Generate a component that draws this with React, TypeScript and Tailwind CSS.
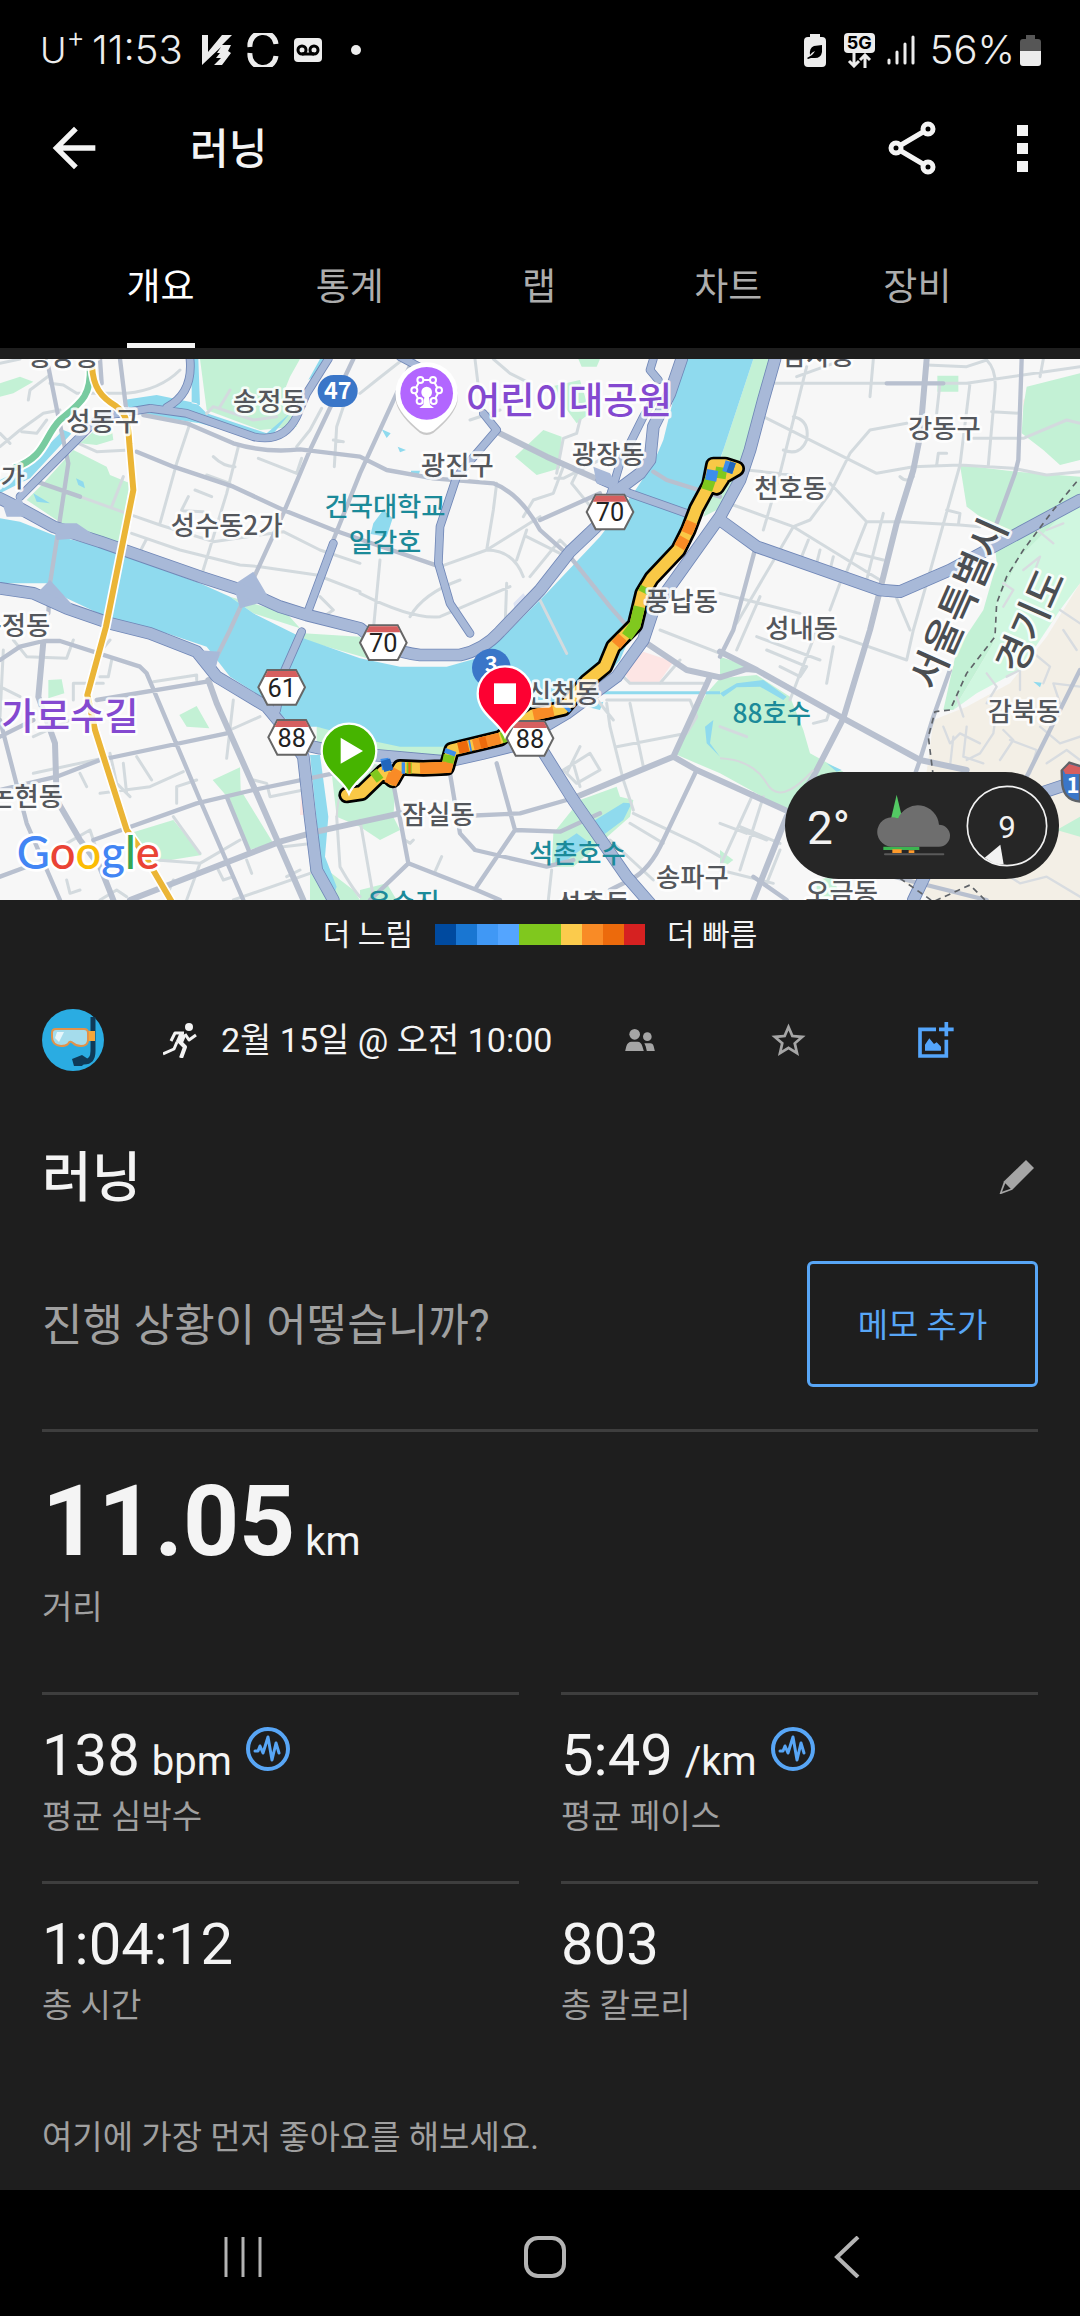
import React, { useState } from "react";
import { MdArrowBack, MdStarBorder } from "react-icons/md";

const tabs = ["개요", "통계", "랩", "차트", "장비"];

const paceColors = [
  "#004a9f", "#1976d2", "#4098f5", "#54a5ff", "#80c81e",
  "#80c81e", "#fbcb4c", "#f98b26", "#ec6a0c", "#d62121",
];

const stats = [
  { value: "138", unit: "bpm", label: "평균 심박수", chart: true },
  { value: "5:49", unit: "/km", label: "평균 페이스", chart: true },
  { value: "1:04:12", label: "총 시간" },
  { value: "803", label: "총 칼로리" },
];

// Map geometry, in the units of the map's viewBox
const minorRoads = [
  "M85 150 L90 120 L150 75 M150 100 L190 105 L230 130 L380 130 Q480 120 540 60",
  "M0 40 L60 27 M0 290 L60 240 L130 190 L180 180 M0 250 L30 280 M65 245 L110 250 L140 210",
  "M235 280 L290 305 L390 300 M570 220 L530 340 L480 520 M715 290 L680 430 L605 675",
  "M370 380 L335 470 M240 440 L380 490 L480 525 L640 575 L850 545 L960 600 L1080 640",
  "M395 550 L540 600 L720 645 L780 650 M780 650 L950 675 L1080 725 M438 570 L420 605",
  "M640 320 Q670 350 705 350 M775 325 L890 370 L905 325 M620 375 L690 400 M585 420 L635 440",
  "M545 480 L565 440 M545 482 L610 485 M965 175 L930 240 L890 290 M1030 170 L1010 230 L1003 350",
  "M1000 270 L1030 275 M960 740 L1000 780 L970 800 M620 190 L640 170 L760 210 L830 200 M660 170 L690 120",
  "M1210 27 L1130 90 L1080 130 M1425 27 L1435 110 M1480 27 L1530 70 L1590 100 M1410 210 L1500 180",
  "M1690 350 L1660 430 L1600 450 L1570 500 M1740 350 L1715 400 L1780 480 M1665 385 L1690 385 L1800 330",
  "M1740 210 L1730 250 L1690 265 L1670 370 M1490 400 L1480 480 L1460 600 M1320 650 L1460 600 Q1540 600 1570 680",
  "M1580 540 L1550 630 M1460 600 L1620 500 M1590 680 L1680 570 L1720 610 M1080 730 Q1240 810 1320 800 L1530 710",
  "M1230 800 Q1270 730 1380 690 M1520 700 L1515 840 M1140 630 L1120 840 M1580 560 L1680 610 M1610 730 L1700 910",
  "M2310 100 L2900 100 L3240 50 M2290 200 L2630 370 L2740 350 L2880 345 L3040 355 L3140 375 L3240 365",
  "M2420 50 L2340 370 L2290 540 M2910 100 L2880 345 L2780 700 L2740 840 M2960 30 Q2990 60 2985 120 L2965 345",
  "M2600 515 L2700 515 L2880 525 L2940 530 M2720 220 L2610 240 L2550 310 L2490 430 L2430 510 L2380 530 L2200 465",
  "M2490 400 L2600 515 L2530 690 M2380 530 L2640 690 M2380 530 L2210 820 M2975 185 L3060 190",
  "M2920 265 L3070 265 L3200 210 L3240 220 M2820 100 L2810 190 M2620 27 L2610 140 M2650 490 L2600 690",
  "M2570 610 L2650 630 M2160 730 L2400 790 M2280 740 L2210 900 M2520 700 L2490 780 M2690 745 L2730 840",
  "M2380 200 Q2430 210 2420 270 Q2400 320 2350 300 M2425 570 L2405 620 M2460 600 L2450 640 M2500 620 L2490 660",
  "M2840 480 L2880 490 L2875 525 M2810 345 L2815 310 L2840 310 M2780 45 L2900 50 L2960 30 M3120 80 L3130 27",
  "M2240 360 L2380 375 M2390 80 L2500 40 M2700 380 Q2720 400 2740 380",
  "M40 870 L80 920 L200 925 L220 870 M280 930 L330 870 M220 1050 L220 1000 L310 1000 M300 980 L325 980 L335 930",
  "M460 995 L590 975 L590 990 M0 1010 L60 1040 M0 1100 L10 900 M100 1160 L210 1110 M330 1210 L350 1300 L390 1340",
  "M370 1240 L380 1330 M410 1220 L455 1290 M300 1330 L450 1310 L550 1265 M100 1270 L330 1220 M240 1270 L260 1310",
  "M530 1360 L530 1310 L590 1290 M680 1225 L700 1050 M690 1140 L780 1100 M760 1290 L800 1300 L810 1340 L910 1320",
  "M200 1480 L270 1440 L290 1500 M300 1650 L350 1620 L380 1640 M650 1550 L670 1590 L700 1580 M700 1650 L930 1570",
  "M470 1530 L600 1540 L720 1470 M520 1400 Q570 1470 600 1510 M200 1590 L210 1630 L240 1620 M850 1490 L940 1480",
  "M740 1530 L755 1570 M860 1580 L900 1560 M500 1640 L520 1590 M600 1540 L560 1650",
  "M1010 1400 L1020 1550 Q1060 1620 1080 1640 M1080 1410 L1120 1640 M1240 1470 L1230 1480 L1215 1470 M1325 1520 L1305 1565",
  "M1820 1050 L2070 1050 L2090 1100 L2060 1150 L1850 1190 M1820 1060 L1830 1130 L1870 1290 L1900 1380",
  "M1890 1060 L1930 1250 M1690 1260 L1770 1210 L1800 1260 L1730 1300 Z M1740 1190 L1700 1270 M1720 1240 L1740 1310",
  "M1900 1390 L2090 1480 L2160 1520 M1890 1420 L1990 1480 M1830 1470 L1960 1590 M1655 1560 L1645 1650",
  "M1860 970 L1890 1000 L2110 1000 M1980 1000 L2040 930 M1980 840 L2160 910 M1760 1010 L1840 1110",
  "M2160 1130 L2240 1160 M2160 1550 L2260 1330 M2220 1440 L2300 1470 M2160 1420 L2240 1450 M2290 1340 L2220 1560",
  "M2220 1430 L2340 1480 M2160 1560 L2320 1600 M2300 1600 L2340 1500 M2480 1000 L2500 890 M2300 900 L2420 950 L2400 980 L2340 950 M2270 860 L2460 930",
  "M2520 860 L2720 930 M2740 840 L2720 930 M2450 840 L2370 1050 M2440 1120 L2480 1110 L2490 1080",
];

const beigeLanes = [
  "M2830 1130 L2850 1180 L2880 1150 L2940 1180 M2860 1160 L2850 1250 M2900 1130 L2890 1220 L2950 1240",
  "M2960 970 L2990 1010 L2960 1060 M3020 980 L3060 960 L3060 1020 M2990 1080 L2980 1150 L2940 1210 L2900 1230",
  "M3010 1140 L3040 1170 L3000 1230 M3030 1170 L3110 1200 L3090 1270 M3120 1130 L3180 1180 L3240 1160",
  "M3140 1240 L3200 1200 L3240 1230 M3180 1060 L3160 1000 L3240 1010 M3090 900 L3150 950 L3130 1000",
  "M3000 1560 L3060 1600 L3140 1580 L3240 1640 M3090 700 L3120 620 L3070 660 M3010 770 L3040 720 L3010 700 M3100 530 L3160 580 M3140 540 L3190 520",
  "M3180 780 L3240 820 M3190 840 L3230 900 M2870 1040 L2890 1100",
];

const arterials = [
  "M145 50 L175 200 L205 340 L175 540 L150 700 L145 790",
  "M360 27 L380 190 M410 305 L520 350 L700 410 L850 480 L1000 540 L1130 585 L1320 650",
  "M430 195 L560 220 L700 280 Q800 310 900 298 L1080 320 L1160 360 L1300 385 L1480 400 Q1560 430 1620 540 L1710 620 L1830 770 L1900 850",
  "M1060 27 L930 300 L850 490 L740 730 L690 840 L650 920 M1240 27 L1190 130 L1080 370 L1000 570",
  "M1620 510 L1800 430 M1960 365 L2000 390 L2160 440 M110 395 L240 440 M300 27 L305 100",
  "M0 930 L60 890 L130 873 L180 873 L420 950 L440 970 L600 1350 L730 1650",
  "M0 1110 L80 1420 L180 1650 M0 1160 L100 1110 M290 1050 L620 995 M0 1320 L170 1280 L300 1230 L680 1150",
  "M280 1470 L590 1360 L760 1320 L1000 1270 M680 1340 L750 1510 M0 1580 L80 1550",
  "M1180 1300 L1225 1540 L1430 1620 L1500 1650 M1225 1540 L1110 1650 M1350 1270 L1380 1450 L1425 1500 L1640 1550 L1720 1530",
  "M1490 1240 L1545 1440 L1430 1610 M1390 1398 L1560 1390 L1700 1350 M1545 1440 L1680 1445 L1800 1390",
  "M2090 1260 L1990 1470 Q1950 1560 1890 1590 L1830 1620",
  "M2270 580 L2200 840 L2160 920 M3240 960 L3080 1280 M2850 960 L2800 1100 L2760 1230 L2700 1400 M2600 1560 L2960 1650",
  "M3065 27 L3055 330 L3045 370 L2990 520 M2660 100 L2830 100 M2260 1580 L2360 1650",
];

const wideArterials = [
  "M130 875 L115 1040 L165 1180 L170 1350 L240 1470 L300 1550 L340 1650",
  "M625 990 L650 1060 L770 1330 L910 1650",
  "M390 1650 L840 1475 L950 1445 L1200 1390",
  "M1500 250 L1640 320 L1820 400",
  "M1730 1340 L2020 1220 L2130 980 M2020 1220 L2090 1260 L2400 1400",
  "M1940 880 L2060 960 L2160 982 L2240 957 L2270 960 L2530 1105 L2760 1230 L2900 1260 M2160 905 L2270 960",
  "M2780 27 L2760 260 L2740 360 L2690 520 L2640 720 L2610 840 L2530 1105 L2440 1280 L2360 1400 L2260 1650",
];

const highways = [
  "M60 440 L220 280 L300 200 L450 175 L560 190 L760 260 Q850 280 890 200 L920 130 L985 27",
  "M570 27 Q580 130 500 172",
  "M1200 20 L1340 95 M1450 190 L1490 240 L1370 380 L1320 530 L1315 640 L1350 760 L1410 850",
  "M1000 580 L920 795 M905 845 L850 970 L830 1080",
  "M1960 27 L1950 60 L1975 90 M1830 440 L1860 340 L1930 200 L1960 150",
  "M2060 490 L1890 430 L1800 390",
];

const wideHighways = [
  "M0 445 L60 475 L160 530 L300 575 L600 680 L740 725 L840 770 L920 795 L1080 835 Q1160 905 1260 915 L1380 915 Q1450 900 1500 845 L1620 720 L1710 605 L1810 510 L1840 430 L1920 370 L1950 330 L1960 230 L2010 130 L2045 27",
  "M0 715 L100 730 L200 775 L330 820 L450 850 L590 905 L650 980 L800 1070 L850 1130 L910 1220 L930 1400 L950 1560 L1000 1650",
  "M850 1170 L960 1195 L1120 1215 L1340 1235 L1450 1210 L1530 1190 L1700 1090 L1850 980 L1930 870 L1960 780 L2060 640 L2160 500 L2220 390 L2250 300 L2290 150 L2325 27",
  "M2160 510 L2270 590 L2640 720 L2700 725 L2850 660 L3240 450",
  "M1620 1190 L1720 1350 L1880 1580 L1950 1660",
  "M2740 1650 L2850 1420 L3240 1290",
];

const river =
  "M0 505 L60 515 L160 555 L300 590 L600 700 L690 740 L760 790 L910 865 L1080 925 L1200 950 L1340 950 L1430 925 L1500 870 L1640 730 L1800 560 L1900 430 L1960 340 L1990 270 L2050 27 L2260 27 L2170 300 L2110 460 L2000 640 L1920 790 L1860 930 L1760 1050 L1640 1110 L1500 1150 L1340 1190 L1200 1190 L1080 1165 L950 1130 L880 1130 L800 1050 L690 980 L620 890 L500 850 L370 825 L200 745 L140 700 L0 700 Z";

const parks = [
  "M600 27 L900 27 L870 80 L850 130 L890 230 L780 240 L620 180 Z",
  "M130 400 L220 300 L240 310 L320 350 L330 375 L390 400 L355 590 L200 530 L80 450 Z",
  "M240 280 L330 200 L340 270 L290 285 Z M0 100 L60 80 L100 95 L40 130 L0 140 Z",
  "M1545 320 L1630 240 L1685 260 L1680 355 L1610 375 Z M1735 27 L1800 27 L1790 50 L1745 50 Z",
  "M1650 110 L1740 90 L1770 190 L1730 220 Z M690 740 L860 790 L900 835 L760 790 Z",
  "M145 990 L185 988 L193 1030 L145 1045 Z M538 1095 L590 1068 L628 1135 L560 1130 Z",
  "M638 1290 L720 1252 L722 1320 L820 1480 L745 1500 L690 1350 Z M390 1450 L520 1410 L605 1515 L480 1535 Z",
  "M910 850 L1080 860 L1120 930 L910 870 Z M950 1130 L1340 1190 L1330 1225 L1080 1210 L950 1190 Z",
  "M985 1180 L1190 1270 L1180 1400 L1200 1440 L1140 1470 L1080 1430 L1010 1400 Z M930 1520 L1060 1620 L1080 1650 L930 1650 Z",
  "M1740 1350 L1850 1310 L1860 1340 L1900 1350 L1890 1400 L1720 1550 L1655 1550 L1660 1450 Z M1080 1620 L1160 1600 L1190 1650 L1080 1650 Z",
  "M2120 1030 L2160 985 L2270 975 L2370 1040 L2410 1140 L2430 1210 L2530 1265 L2430 1300 L2360 1380 L2160 1270 L2020 1210 Z",
  "M2160 920 L2250 950 L2160 975 Z M2260 27 L2310 27 L2210 390 L2150 480 L2110 500 L2170 300 Z",
  "M2812 77 L2875 77 L2875 125 L2812 125 Z M3080 110 L3240 70 L3240 330 L3180 345 L3130 300 L3065 250 L3070 170 Z",
  "M2880 345 L3050 365 L3240 380 L3240 440 L3060 620 L2990 760 L2980 880 L2860 1080 L2830 1080 L2870 900 L2950 780 L2990 640 L2980 530 L2900 470 Z",
  "M2160 1500 L2200 1530 L2160 1560 Z M2450 1590 L2500 1580 L2520 1640 L2450 1640 Z M3170 1440 L3240 1400 L3240 1460 Z",
];

const waters = [
  "M80 350 L190 240 L215 250 L90 385 L0 430 L0 390 Z",
  "M370 150 L470 135 L590 160 L620 190 L800 250 L870 190 L800 275 L600 220 L400 190 Z",
  "M595 27 L575 27 L575 160 L600 165 Z M940 80 L990 27 L960 27 L925 90 Z",
  "M228 385 L250 395 L255 415 L235 405 Z M100 430 L150 460 L110 455 Z M1145 238 L1172 250 L1160 264 Z M1193 290 L1218 300 L1200 307 Z M1233 362 L1260 362 L1256 375 L1233 375 Z",
  "M1120 520 L1150 480 L1178 505 L1160 560 L1112 552 Z",
  "M930 1215 L960 1215 L985 1400 L975 1520 L1010 1610 L1000 1640 L965 1560 Z",
  "M1770 1420 L1870 1358 L1895 1360 L1870 1410 L1790 1470 Z M1670 1490 L1730 1450 L1770 1480 L1700 1530 L1665 1540 Z",
  "M2160 1030 L2210 1000 L2290 990 L2360 1040 L2350 1050 L2280 1010 L2210 1012 L2170 1040 Z M2115 1130 L2140 1110 L2130 1180 L2160 1220 L2120 1180 Z",
  "M2480 1240 L2525 1260 L2510 1265 Z M3100 995 L3125 998 L3120 1012 Z M1760 1070 L1810 1055 L1800 1080 Z",
];

const track =
  "M1040 1335 L1085 1328 L1150 1265 L1178 1290 L1200 1252 L1270 1255 L1340 1252 L1355 1200 L1500 1165 L1600 1095 L1690 1075 L1760 995 L1815 950 L1840 890 L1905 825 L1928 730 L1955 685 L2035 600 L2065 540 L2090 475 L2128 405 L2140 345 L2175 345 L2210 356 L2172 378 L2150 412";

const paceSegments = [
  { color: "#80c81e", d: "M1120 1285 L1140 1270 M1220 1254 L1235 1254 M1343 1240 L1348 1215 M1505 1164 L1520 1158 M1880 860 L1905 825 L1918 770 M1930 728 L1938 712 M2120 420 L2132 385 M2160 385 L2165 352" },
  { color: "#f98b26", d: "M1160 1280 L1180 1288 L1195 1260 M1260 1255 L1340 1252 L1343 1238 M1420 1185 L1500 1165 M1600 1095 L1660 1082 M2038 592 L2054 564 M2060 550 L2075 515 M1848 885 L1868 862" },
  { color: "#ec6a0c", d: "M1375 1195 L1405 1188 M1440 1180 L1460 1175 M1225 1254 L1232 1254" },
  { color: "#3c8eea", d: "M1144 1244 L1168 1240 M1205 1254 L1215 1254 M1348 1214 L1353 1200 M1408 1188 L1413 1187 M1695 1076 L1703 1068 M2132 392 L2138 360 M2172 347 L2202 356" },
  { color: "#2166bd", d: "M1148 1250 L1175 1242 M2185 350 L2202 356" },
];

const placeLabels = [
  { x: 188, y: 48, text: "행당동" },
  { x: 308, y: 244, text: "성동구" },
  { x: 808, y: 182, text: "송정동" },
  { x: 16, y: 410, text: "2가" },
  { x: 680, y: 555, text: "성수동2가" },
  { x: 5, y: 855, text: "압구정동" },
  { x: 1372, y: 375, text: "광진구" },
  { x: 1825, y: 341, text: "광장동" },
  { x: 2045, y: 782, text: "풍납동" },
  { x: 2455, y: 44, text: "암사동" },
  { x: 2833, y: 264, text: "강동구" },
  { x: 2372, y: 445, text: "천호동" },
  { x: 2405, y: 863, text: "성내동" },
  { x: 80, y: 1369, text: "논현동" },
  { x: 1315, y: 1422, text: "잠실동" },
  { x: 1690, y: 1060, text: "신천동" },
  { x: 2077, y: 1612, text: "송파구" },
  { x: 1780, y: 1690, text: "석촌동" },
  { x: 3072, y: 1114, text: "감북동" },
  { x: 2525, y: 1657, text: "오금동" },
];

const waterLabels = [
  { x: 1155, y: 497, text: "건국대학교" },
  { x: 1155, y: 607, text: "일감호" },
  { x: 1732, y: 1540, text: "석촌호수" },
  { x: 1210, y: 1686, text: "유수지" },
  { x: 2315, y: 1120, text: "88호수" },
];

const shields = [
  { x: 1830, y: 486, text: "70" },
  { x: 845, y: 1012, text: "61" },
  { x: 875, y: 1162, text: "88" },
  { x: 1150, y: 878, text: "70" },
  { x: 1590, y: 1165, text: "88" },
];

function Roads({ paths, width, color }: { paths: string[]; width: number; color: string }) {
  return <path d={paths.join(" ")} fill="none" stroke={color} strokeWidth={width} strokeLinejoin="round" strokeLinecap="round" />;
}

function Pin({ x, y, color, children }: { x: number; y: number; color: string; children: React.ReactNode }) {
  return (
    <g transform={`translate(${x} ${y})`}>
      <path d="M0 128 C-18 84 -82 60 -82 0 A82 82 0 0 1 82 0 C82 60 18 84 0 128 Z" fill={color} stroke="#fff" strokeWidth="7" />
      {children}
    </g>
  );
}

function RouteMap() {
  return (
    <svg viewBox="0 27 3240 1623" className="block h-auto w-full font-['Noto_Sans_CJK_KR',sans-serif]" role="img" aria-label="지도">
      <rect y="27" width="3240" height="1623" fill="#f7f7f7" />
      <path d="M3240 700 L3140 860 L3030 1000 L2900 1070 L2800 1110 L2785 1230 L2760 1400 L2700 1590 L2800 1650 L3240 1650 Z" fill="#f3efe6" />
      <path d="M3240 430 L3060 620 L2990 760 L2980 880 L2860 1080 L2930 1030 L3060 960 L3180 780 L3240 700 Z" fill="#d0f7e0" />
      <path d="M1870 960 L1930 905 L2020 935 L1975 1000 L1890 1000 Z M905 1290 L918 1395 L900 1395 Z M3070 150 L3100 120 L3100 160 L3070 230 Z" fill="#fde5e4" />
      <path d="M1540 760 L1570 730 L1600 770 L1550 800 Z M620 27 L650 80 L660 110 L625 120 Z" fill="#dde3f3" />
      <path d={parks.join(" ")} fill="#c3f1d5" />
      <path d={river} fill="#8fdaee" />
      <path d={waters.join(" ")} fill="#8fdaee" />
      <path d="M1790 1028 H2160" stroke="#8fdaee" strokeWidth="9" />

      <Roads paths={beigeLanes} width={7} color="#d8dce0" />
      <Roads paths={minorRoads} width={9} color="#d3dade" />
      <Roads paths={arterials} width={13} color="#b8c0cf" />
      <Roads paths={wideArterials} width={18} color="#b8c0cf" />
      <path d="M1080 1230 L1180 1270 Q1020 1210 1010 1400 M2160 1225 Q2260 1230 2300 1300 T2440 1260" fill="none" stroke="#d5d9dc" strokeWidth="6" />
      <Roads paths={highways} width={26} color="#7087b7" />
      <Roads paths={wideHighways} width={38} color="#7087b7" />
      <path d="M150 690 L240 790 L100 740 Z M700 705 L760 665 L810 750 L720 775 Z M160 520 L230 520 L290 560 L170 570 Z M10 470 L60 440 L90 500 L20 500 Z M1780 350 L1830 370 L1860 420 L1790 400 Z M590 900 L660 905 L640 980 Z" fill="#a8b9d8" />
      <Roads paths={highways} width={21} color="#a8b9d8" />
      <Roads paths={wideHighways} width={33} color="#a8b9d8" />

      <path
        d="M3230 395 L3160 480 L3070 600 L3020 680 L2990 760 L2985 860 L2900 970 L2850 1080 L2805 1085 L2785 1160 L2800 1280 M2700 1585 L2800 1655 L2910 1605 L2960 1655"
        fill="none" stroke="#5f6368" strokeWidth="5" strokeDasharray="18 14"
      />

      {/* Subway lines */}
      <path d="M270 50 C275 140 240 160 180 210 C130 260 140 320 40 355" fill="none" stroke="#fff" strokeWidth="32" />
      <path d="M270 50 C275 140 240 160 180 210 C130 260 140 320 40 355" fill="none" stroke="#78cba0" strokeWidth="20" />
      <path d="M276 50 C280 110 300 140 350 170 C382 192 385 230 388 280 L400 420 L318 830 L262 1035 L285 1140 L380 1440 L430 1510 L515 1655" fill="none" stroke="#fff" strokeWidth="28" />
      <path d="M276 50 C280 110 300 140 350 170 C382 192 385 230 388 280 L400 420 L318 830 L262 1035 L285 1140 L380 1440 L430 1510 L515 1655" fill="none" stroke="#ebb536" strokeWidth="18" />

      {/* Route, coloured by pace */}
      <path d={track} fill="none" stroke="#000" strokeWidth="50" strokeLinejoin="round" strokeLinecap="round" />
      <path d={track} fill="none" stroke="#f9c846" strokeWidth="34" strokeLinejoin="round" strokeLinecap="round" />
      {paceSegments.map((s) => (
        <path key={s.color} d={s.d} fill="none" stroke={s.color} strokeWidth="34" />
      ))}

      {/* Road numbers */}
      <rect x="953" y="75" width="120" height="96" rx="48" fill="#3a76c8" />
      <text x="1013" y="148" textAnchor="middle" fontSize="70" fontWeight="700" fill="#fff">47</text>
      <circle cx="1474" cy="954" r="58" fill="#3a76c8" />
      <text x="1474" y="966" textAnchor="middle" fontSize="66" fontWeight="700" fill="#fff">3</text>
      <path d="M3185 1262 L3208 1238 L3240 1248 V1355 Q3186 1350 3186 1290 Z" fill="#3a76c8" stroke="#5f6368" strokeWidth="7" />
      <path d="M3190 1260 L3208 1242 L3240 1252 V1272 H3196 Z" fill="#d65f5f" />
      <text x="3219" y="1328" textAnchor="middle" fontSize="66" fontWeight="700" fill="#fff">1</text>

      <g fontSize="79" fontWeight="500" fill="#54575c" stroke="#fff" strokeOpacity="0.85" strokeWidth="16" strokeLinejoin="round" paintOrder="stroke" textAnchor="middle">
        {placeLabels.map((l) => (
          <text key={l.text} x={l.x} y={l.y}>{l.text}</text>
        ))}
        <g fontSize="118" fill="#4b4e52">
          <text transform="translate(2915 778) rotate(-66)">서울특별시</text>
          <text transform="translate(3130 830) rotate(-66)">경기도</text>
        </g>
        <g fontSize="112" fontWeight="500" fill="#8449d0">
          <text x="1707" y="192">어린이대공원</text>
          <text x="210" y="1140">가로수길</text>
        </g>
      </g>
      <g fontSize="79" fontWeight="500" fill="#1b8a99" textAnchor="middle">
        {waterLabels.map((l) => (
          <text key={l.text} x={l.x} y={l.y}>{l.text}</text>
        ))}
      </g>

      {shields.map((s) => (
        <g key={`${s.x}-${s.text}`} transform={`translate(${s.x} ${s.y})`}>
          <path d="M-70 0 L-43 -52 H43 L70 0 L43 52 H-43 Z" fill="#fff" stroke="#666" strokeWidth="6" />
          <path d="M-42 -49 H42 L51 -31 H-51 Z" fill="#d65f5f" />
          <text y="28" textAnchor="middle" fontSize="76" fill="#222" className="font-['Roboto',sans-serif]">{s.text}</text>
        </g>
      ))}

      {/* Amusement park marker */}
      <g transform="translate(1280 130)">
        <path d="M-92 20 A94 94 0 1 1 92 20 Q82 62 20 112 Q0 124 -20 112 Q-82 62 -92 20 Z" fill="#00000030" transform="translate(0 7)" />
        <path d="M-92 20 A94 94 0 1 1 92 20 Q82 62 20 112 Q0 124 -20 112 Q-82 62 -92 20 Z" fill="#fff" />
        <circle r="79" fill="#b266ff" />
        <g stroke="#fff" strokeWidth="6" fill="none">
          <circle cx="-19" cy="-40" r="9" /><circle cx="19" cy="-40" r="9" />
          <circle cx="-37" cy="-9" r="9" /><circle cx="37" cy="-9" r="9" />
          <circle cx="-21" cy="23" r="9" /><circle cx="21" cy="23" r="9" />
          <path d="M-10 -40 H10 M-24 -32 L-32 -17 M24 -32 L32 -17 M-34 0 L-26 15 M34 0 L26 15" />
        </g>
        <path d="M-16 -4 A16 16 0 0 1 16 -4 Q16 8 7 12 L10 34 L22 44 H-22 L-10 34 L-7 12 Q-16 8 -16 -4 Z" fill="#fff" />
      </g>

      <Pin x={1047} y={1203} color="#46b400">
        <path d="M-25 -40 V38 L42 0 Z" fill="#fff" />
      </Pin>
      <Pin x={1515} y={1031} color="#fd0132">
        <rect x="-33" y="-31" width="66" height="62" fill="#fff" />
      </Pin>

      <text x="50" y="1557" fontSize="136" fontWeight="500" stroke="#fff" strokeWidth="16" strokeLinejoin="round" paintOrder="stroke" className="font-['Lato',sans-serif]">
        <tspan fill="#4285f4">G</tspan>
        <tspan fill="#ea4335">o</tspan>
        <tspan fill="#fbbc05">o</tspan>
        <tspan fill="#4285f4">g</tspan>
        <tspan fill="#34a853">l</tspan>
        <tspan fill="#ea4335">e</tspan>
      </text>
    </svg>
  );
}

function WeatherPill() {
  return (
    <div className="absolute right-[21px] bottom-[21px] flex h-[107px] w-[274px] items-center rounded-full bg-[#262626] pr-[11px] pl-[22px] text-[#f2f2f2]">
      <span className="pt-1 text-[46px] leading-none">2°</span>
      <svg viewBox="0 0 225 187" className="mr-[15px] ml-auto w-[75px]">
        <path d="M62 2 L45 74 H79 Z" fill="#53c963" />
        <path d="M22 158 H130 V168 H22 Z" fill="#3cb450" />
        <path d="M49 166 H77 V177 H49 Z M98 169 H115 V177 H98 Z" fill="#fd9a2b" />
        <path d="M46 158 A44 44 0 1 1 66 74 A64 64 0 0 1 189 92 A33 33 0 0 1 189 158 Z" fill="#6e6e6e" />
        <path d="M27 181 H202" stroke="#5a5a5a" strokeWidth="6" strokeLinecap="round" />
      </svg>
      <svg viewBox="0 0 246 246" className="w-[82px]">
        <circle cx="123" cy="123" r="119" fill="none" stroke="#f2f2f2" strokeWidth="5" />
        <path d="M103 179 L56 218 L85 236 L113 238 Z" fill="#f2f2f2" />
        <text x="123" y="160" textAnchor="middle" fontSize="94" fill="#f2f2f2">9</text>
      </svg>
    </div>
  );
}

function StatusBar() {
  return (
    <div className="flex h-[100px] items-center pr-[39px] pl-10 font-['Inter',sans-serif] text-[40px] text-[#ededed]">
      <span className="flex w-[42px] items-center text-[36px] font-light">
        U<sup className="top-0 self-start text-[28px] leading-none">+</sup>
      </span>
      <span className="ml-[10px] w-[90px] font-light whitespace-nowrap">11:53</span>
      <div className="ml-5 flex items-center gap-[15px]">
        <svg viewBox="0 0 30 30" className="w-[30px]" fill="currentColor">
          <path d="M0 0 H6 V17 L20 0 H30 L20 10 H29 L26 16 L29 18 L20 30 H12 L19 23 H14 L18 18 H15 L19 12 L0 30 Z" />
        </svg>
        <svg viewBox="0 0 32 34" className="w-8" fill="none" stroke="currentColor" strokeWidth="5">
          <path d="M3 14 A13 13 0 0 1 29 11 M3 20 A13 13 0 0 0 29 23" />
        </svg>
        <svg viewBox="0 0 28 24" className="w-7">
          <rect width="28" height="24" rx="4" fill="currentColor" />
          <g fill="none" stroke="#000" strokeWidth="3">
            <circle cx="8" cy="12" r="4" /><circle cx="20" cy="12" r="4" />
            <path d="M8 16 H20" />
          </g>
        </svg>
        <span className="ml-[14px] size-[10px] rounded-full bg-current" />
      </div>
      <div className="ml-auto flex items-center">
        <svg viewBox="0 0 22 33" className="w-[22px]" fill="currentColor">
          <path d="M6 0 H16 V3 H18 Q22 3 22 7 V29 Q22 33 18 33 H4 Q0 33 0 29 V7 Q0 3 4 3 H6 Z" />
          <path d="M18 11 V18 Q17 24 11 24 H7 L4 25 L3 24 L8 21 Q10 19 11 17 Q8 18 6 21 Q5 14 10 12 Z" fill="#000" />
        </svg>
        <div className="ml-[18px] flex w-[31px] flex-col items-center">
          <span className="rounded-sm bg-[#ededed] px-[3px] text-[18px] leading-[20px] font-bold text-black">5G</span>
          <svg viewBox="0 0 26 15" className="w-[26px]" fill="none" stroke="currentColor" strokeWidth="3">
            <path d="M8 0 V13 M3 8 L8 13 L13 8 M19 15 V2 M14 7 L19 2 L24 7" />
          </svg>
        </div>
        <svg viewBox="0 0 28 30" className="ml-3 w-7" stroke="currentColor" strokeWidth="3" strokeLinecap="round">
          <path d="M2 25 V28 M10 17 V28 M18 9 V28 M26 2 V28" />
        </svg>
        <span className="ml-[15px] font-light">56%</span>
        <svg viewBox="0 0 21 31" className="ml-[5px] w-[21px]">
          <path d="M6 0 H15 V4 H18 Q21 4 21 7 V16 H0 V7 Q0 4 3 4 H6 Z" fill="#565656" />
          <path d="M0 16 H21 V28 Q21 31 18 31 H3 Q0 31 0 28 Z" fill="currentColor" />
        </svg>
      </div>
    </div>
  );
}

function Avatar() {
  return (
    <svg viewBox="0 0 62 62" className="size-[62px]">
      <circle cx="31" cy="31" r="31" fill="#2aace2" />
      <path d="M51 8 V42 Q51 53 42 53 L32 54" fill="none" stroke="#0f3a57" strokeWidth="5" />
      <path d="M30 50 L40 46 L46 50 L40 57 L32 57 Z" fill="#0f3a57" />
      <rect x="44" y="22" width="9" height="10" fill="#f5a63a" />
      <path d="M14 20 H42 Q46 20 46 24 V31 Q46 37 39 37 Q34 37 31 34 Q28 31 26 35 Q24 37 19 37 Q10 36 10 28 V24 Q10 20 14 20 Z" fill="#a5dcec" stroke="#e2924a" strokeWidth="2" />
      <path d="M15 23 L22 23 L17 33 L13 29 Z" fill="#e6f6fb" />
    </svg>
  );
}

function Runner() {
  return (
    <svg viewBox="0 0 34 35" className="w-[34px]" fill="none" stroke="currentColor" strokeLinejoin="round">
      <circle cx="26" cy="4" r="4" fill="currentColor" stroke="none" />
      <path d="M20 11 L16 20" strokeWidth="7" />
      <path d="M21 10 L12 10 L8 18 M22 11 L26 17 L33 12" strokeWidth="3" />
      <path d="M16 18 L22 24 L18 35" strokeWidth="4" />
      <path d="M14 19 L11 26 L0 31" strokeWidth="3" />
    </svg>
  );
}

function PulseIcon() {
  return (
    <svg viewBox="0 0 44 44" className="size-11" fill="none" stroke="#58a6f6" strokeLinejoin="round">
      <circle cx="22" cy="22" r="20" strokeWidth="4" />
      <path d="M9 24 H12 L14 19 L17 26 L22 10 L26 33 L30 16 L33 26" strokeWidth="3" strokeLinecap="round" />
    </svg>
  );
}

export default function App() {
  const [active, setActive] = useState("개요");

  return (
    <div className="min-h-screen bg-[#1e1e1e] font-['Roboto','Noto_Sans_CJK_KR',sans-serif] text-[#f4f4f4]">
      <header className="bg-black">
        <StatusBar />
        <div className="flex h-24 items-center pr-[52px] pl-[42px]">
          <button type="button" aria-label="뒤로">
            <MdArrowBack className="size-16" />
          </button>
          <h1 className="ml-[84px] pt-1 text-[42px] leading-none font-medium">러닝</h1>
          <button type="button" aria-label="공유" className="ml-auto">
            <svg viewBox="0 0 48 54" className="w-12" fill="none" stroke="currentColor" strokeWidth="5">
              <circle cx="8" cy="27" r="5" /><circle cx="40" cy="8" r="5" /><circle cx="40" cy="46" r="5" />
              <path d="M13 24 L35 11 M13 30 L35 43" />
            </svg>
          </button>
          <button type="button" aria-label="더보기" className="ml-[81px] flex flex-col gap-[7px]">
            <span className="size-[11px] bg-current" />
            <span className="size-[11px] bg-current" />
            <span className="size-[11px] bg-current" />
          </button>
        </div>
        <nav className="mt-7 flex h-[124px] pr-[68px] pl-[66px]">
          {tabs.map((tab) => (
            <button
              key={tab}
              type="button"
              onClick={() => setActive(tab)}
              className={`flex flex-1 justify-center text-[37px] ${tab === active ? "text-white" : "text-[#adadad]"}`}
            >
              <span className={`flex h-full items-center border-b-[5px] pt-2 ${tab === active ? "border-[#f4f4f4]" : "border-transparent"}`}>
                {tab}
              </span>
            </button>
          ))}
        </nav>
      </header>

      <main>
        <section className="relative mt-[11px]">
          <RouteMap />
          <WeatherPill />
        </section>

        <div className="flex h-[68px] items-center justify-center gap-[22px] text-[30px]">
          <span>더 느림</span>
          <div className="flex">
            {paceColors.map((c, i) => (
              <span key={i} className="size-[21px]" style={{ backgroundColor: c }} />
            ))}
          </div>
          <span>더 빠름</span>
        </div>

        <div className="px-[42px]">
          <div className="flex h-36 items-center">
            <Avatar />
            <div className="ml-[59px]">
              <Runner />
            </div>
            <time className="ml-6 text-[34px] whitespace-nowrap">2월 15일 @ 오전 10:00</time>
            <div className="mr-7 ml-auto grid w-[444px] shrink-0 grid-cols-3 place-items-center text-[#a5a5a5]">
              <button type="button" aria-label="그룹">
                <svg viewBox="0 0 90 68" className="w-[30px]" fill="currentColor">
                  <circle cx="29" cy="16" r="16" /><circle cx="67" cy="23" r="13" />
                  <path d="M0 68 L4 52 Q8 38 20 38 H38 Q48 38 52 52 L57 68 Z M58 43 H76 Q84 43 86 52 L90 68 H66 L62 52 Z" />
                </svg>
              </button>
              <button type="button" aria-label="즐겨찾기">
                <MdStarBorder className="size-[41px]" />
              </button>
              <button type="button" aria-label="사진 추가" className="text-[#54a5fb]">
                <svg viewBox="0 0 108 108" className="w-9" fill="none" stroke="currentColor" strokeWidth="11">
                  <path d="M54 22 H6 V102 H85 V53 M85 0 V43 M63 22 H107" />
                  <path d="M21 86 V68 L34 49 L48 66 L56 61 L69 74 V86 Z" fill="currentColor" stroke="none" />
                </svg>
              </button>
            </div>
          </div>

          <div className="flex h-[130px] items-center justify-between">
            <h2 className="pt-1 text-[54px] leading-none font-medium">러닝</h2>
            <button type="button" aria-label="이름 편집" className="mr-1 text-[#a5a5a5]">
              <svg viewBox="0 0 108 104" className="w-9" fill="currentColor">
                <path d="M84 0 L108 24 L43 89 L4 104 L18 64 Z" />
                <path d="M22 70 L38 86 L12 95 Z" fill="#1e1e1e" />
              </svg>
            </button>
          </div>

          <div className="mt-[19px] flex items-center justify-between border-b-[3px] border-[#3e3e3e] pb-[42px]">
            <p className="pt-1 text-[44px] leading-none text-[#a0a0a0]">진행 상황이 어떻습니까?</p>
            <button type="button" className="h-[126px] w-[231px] rounded-md border-[3px] border-[#58a6f6] pt-1 text-[33px] text-[#58a6f6]">
              메모 추가
            </button>
          </div>

          <dl className="flex flex-col-reverse pt-10 pb-[60px]">
            <dt className="mt-3 text-[33px] leading-[48px] text-[#a0a0a0]">거리</dt>
            <dd className="text-[98px] leading-[100px] font-bold">
              11.05<span className="ml-[10px] text-[40px] leading-none font-normal">km</span>
            </dd>
          </dl>

          <dl className="grid grid-cols-2 gap-x-[42px]">
            {stats.map((s) => (
              <div key={s.label} className="flex flex-col-reverse border-t-[3px] border-[#3e3e3e] pt-7 pb-10">
                <dt className="mt-1.5 text-[33px] leading-[48px] text-[#a0a0a0]">{s.label}</dt>
                <dd className="flex items-start gap-[14px] text-[58px] leading-[64px]">
                  <span>
                    {s.value}
                    {s.unit && <span className="ml-3 text-[40px] leading-none">{s.unit}</span>}
                  </span>
                  {s.chart && (
                    <button type="button" aria-label={`${s.label} 차트`} className="mt-1">
                      <PulseIcon />
                    </button>
                  )}
                </dd>
              </div>
            ))}
          </dl>

          <p className="pt-11 pb-7 text-[33px] leading-[48px] text-[#a0a0a0]">여기에 가장 먼저 좋아요를 해보세요.</p>
        </div>
      </main>

      <footer className="grid h-[126px] grid-cols-3 place-items-center bg-black pt-2 pr-[82px] pl-[92px] text-[#b4b4b4]">
        <button type="button" aria-label="최근 앱">
          <svg viewBox="0 0 40 42" className="w-10" stroke="currentColor" strokeWidth="3">
            <path d="M3 1 V41 M20 1 V41 M37 1 V41" />
          </svg>
        </button>
        <button type="button" aria-label="홈">
          <svg viewBox="0 0 42 42" className="w-[42px]" fill="none" stroke="currentColor" strokeWidth="4">
            <rect x="2" y="2" width="38" height="38" rx="12" />
          </svg>
        </button>
        <button type="button" aria-label="이전">
          <svg viewBox="0 0 26 42" className="w-[26px]" fill="none" stroke="currentColor" strokeWidth="4">
            <path d="M24 1 L3 21 L24 41" />
          </svg>
        </button>
      </footer>
    </div>
  );
}
